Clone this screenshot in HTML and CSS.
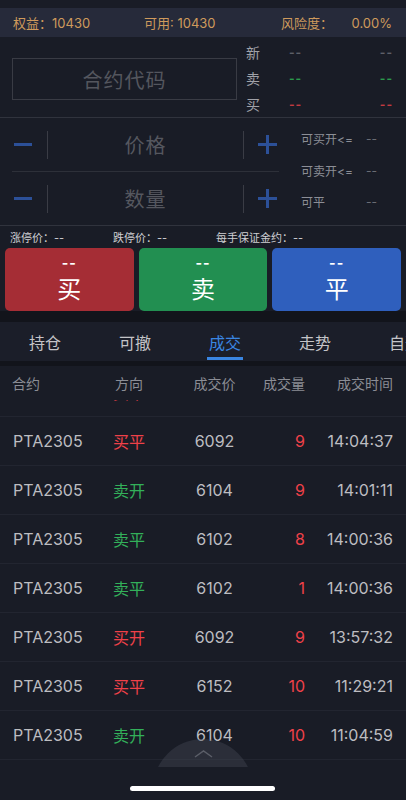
FILE: index.html
```html
<!DOCTYPE html>
<html lang="zh">
<head>
  <meta charset="UTF-8">
  <meta name="viewport" content="width=device-width, initial-scale=1.0">
  <title>交易</title>
  <link rel="stylesheet" href="styles.css">
</head>
<body>
<div class="screen">
  <div class="status"></div>

  <!-- account summary -->
  <div class="account">
    <span class="acc-a">权益：10430</span>
    <span class="acc-b">可用: 10430</span>
    <span>风险度：</span>
    <span class="acc-r">0.00%</span>
  </div>

  <!-- contract + quote -->
  <div class="quote">
    <div class="code-box">合约代码</div>
    <div class="quote-list">
      <div class="q-row"><span class="q-label">新</span><span class="q-val gray">--</span><span class="q-val2 gray">--</span></div>
      <div class="q-row"><span class="q-label">卖</span><span class="q-val green">--</span><span class="q-val2 green">--</span></div>
      <div class="q-row"><span class="q-label">买</span><span class="q-val red">--</span><span class="q-val2 red">--</span></div>
    </div>
  </div>

  <!-- price / qty -->
  <div class="order">
    <div class="steppers">
      <div class="step">
        <div class="step-btn minus"><svg width="18" height="3"><rect width="18" height="3" fill="#2c5098"/></svg></div>
        <div class="step-field">价格</div>
        <div class="step-btn plus"><svg width="19" height="19"><rect x="8" y="0" width="3" height="19" fill="#2c5098"/><rect x="0" y="8" width="19" height="3" fill="#2c5098"/></svg></div>
      </div>
      <div class="step">
        <div class="step-btn minus"><svg width="18" height="3"><rect width="18" height="3" fill="#2c5098"/></svg></div>
        <div class="step-field">数量</div>
        <div class="step-btn plus"><svg width="19" height="19"><rect x="8" y="0" width="3" height="19" fill="#2c5098"/><rect x="0" y="8" width="19" height="3" fill="#2c5098"/></svg></div>
      </div>
    </div>
    <div class="avail">
      <div class="av-row"><span class="av-label">可买开&lt;=</span><span>--</span></div>
      <div class="av-row"><span class="av-label">可卖开&lt;=</span><span>--</span></div>
      <div class="av-row"><span class="av-label">可平</span><span>--</span></div>
    </div>
  </div>

  <div class="limits">
    <span class="lim">涨停价：--</span>
    <span class="lim">跌停价：--</span>
    <span>每手保证金约：--</span>
  </div>

  <div class="actions">
    <div class="act buy"><span class="act-price">--</span><span class="act-name">买</span></div>
    <div class="act sell"><span class="act-price">--</span><span class="act-name">卖</span></div>
    <div class="act close"><span class="act-price">--</span><span class="act-name">平</span></div>
  </div>

  <div class="tabs">
    <div class="tab">持仓</div>
    <div class="tab">可撤</div>
    <div class="tab active">成交</div>
    <div class="tab">走势</div>
    <div class="tab">自选</div>
  </div>

  <div class="thead">
    <span>合约</span>
    <span>方向</span>
    <span class="c">成交价</span>
    <span class="r">成交量</span>
    <span class="r">成交时间</span>
  </div>

  <div class="list">
    <div class="rows">
      <div class="row"><span>PTA2305</span><span class="red">买平</span><span class="c">6092</span><span class="r red">9</span><span class="r">14:10:02</span></div>
      <div class="row"><span>PTA2305</span><span class="red">买平</span><span class="c">6092</span><span class="r red">9</span><span class="r">14:04:37</span></div>
      <div class="row"><span>PTA2305</span><span class="green">卖开</span><span class="c">6104</span><span class="r red">9</span><span class="r">14:01:11</span></div>
      <div class="row"><span>PTA2305</span><span class="green">卖平</span><span class="c">6102</span><span class="r red">8</span><span class="r">14:00:36</span></div>
      <div class="row"><span>PTA2305</span><span class="green">卖平</span><span class="c">6102</span><span class="r red">1</span><span class="r">14:00:36</span></div>
      <div class="row"><span>PTA2305</span><span class="red">买开</span><span class="c">6092</span><span class="r red">9</span><span class="r">13:57:32</span></div>
      <div class="row"><span>PTA2305</span><span class="red">买平</span><span class="c">6152</span><span class="r red">10</span><span class="r">11:29:21</span></div>
      <div class="row"><span>PTA2305</span><span class="green">卖开</span><span class="c">6104</span><span class="r red">10</span><span class="r">11:04:59</span></div>
    </div>

    <div class="pull">
      <div class="pull-disc"></div>
      <svg class="chev" width="20" height="10"><polyline points="1,8 9.5,2 18,8" fill="none" stroke="#5b5e68" stroke-width="1.5"/></svg>
    </div>
    <div class="home-bar"></div>
  </div>
</div>
</body>
</html>
```

FILE: styles.css
```css
body {
    margin: 0;
    background: #191c26;
    font-family: Inter, "Noto Sans CJK SC", sans-serif;
    color: #c8c8cc;
}

.screen {
    width: 406px;
    height: 800px;
    overflow: hidden;
    display: flex;
    flex-direction: column;
}

.status {
    height: 8px;
    background: #191c26;
}

/* account */
.account {
    height: 29px;
    background: #262a3a;
    display: flex;
    align-items: center;
    padding: 0 14px 0 13px;
    font-size: 13px;
    color: #cf9a5c;
}
.acc-a { width: 131px; }
.acc-b { width: 137px; }
.acc-r { margin-left: auto; }

/* quote */
.quote {
    height: 80px;
    display: flex;
    border-bottom: 1px solid #30333d;
}
.code-box {
    margin: 21px 0 0 12px;
    width: 223px;
    height: 40px;
    border: 1px solid #393b44;
    display: flex;
    align-items: center;
    justify-content: center;
    font-size: 20px;
    letter-spacing: 1px;
    color: #54565e;
}
.quote-list {
    margin: 2px 0 0 9px;
    width: 147px;
}
.q-row {
    height: 26px;
    display: flex;
    align-items: center;
    font-size: 14px;
}
.q-label {
    width: 43px;
    color: #a0a1a8;
}
.q-val, .q-val2 {
    font-size: 12px;
    font-weight: bold;
    letter-spacing: 1px;
}
.q-val2 { margin-left: auto; }
.gray { color: #5d5f68; }
.green { color: #33b05a; }
.red { color: #ef4149; }
.q-row .green { color: #2b9a4c; }
.q-row .red { color: #c23a41; }

/* order */
.order {
    height: 107px;
    display: flex;
    border-bottom: 1px solid #30333d;
}
.steppers {
    margin-left: 12px;
    width: 267px;
}
.step {
    height: 53px;
    display: flex;
    align-items: center;
}
.step + .step {
    border-top: 1px solid #2d3039;
    height: 53px;
}
.step-btn {
    width: 35px;
    height: 28px;
    display: flex;
    align-items: center;
}
.minus {
    border-right: 1px solid #3a3c45;
    padding-left: 2px;
    width: 33px;
}
.plus {
    border-left: 1px solid #3a3c45;
    justify-content: flex-end;
    padding-right: 2px;
    width: 33px;
}
.step-field {
    flex: 1;
    text-align: center;
    font-size: 20px;
    letter-spacing: 1px;
    color: #55575f;
}
.avail {
    margin: 5px 0 0 22px;
}
.av-row {
    height: 31.5px;
    display: flex;
    align-items: center;
    font-size: 12px;
    color: #6a6c74;
}
.av-label {
    width: 65px;
    color: #8c8e96;
}

.limits {
    height: 22px;
    display: flex;
    align-items: center;
    padding-left: 10px;
    font-size: 11px;
    color: #cfcfd3;
}
.lim { width: 103px; }

/* buttons */
.actions {
    display: grid;
    grid-template-columns: 1fr 1fr 1fr;
    gap: 5px;
    padding: 0 5px;
    height: 63px;
}
.act {
    border-radius: 5px;
    color: #fff;
    display: flex;
    flex-direction: column;
    align-items: center;
}
.act-price {
    font-size: 14px;
    font-weight: bold;
    margin-top: 6px;
    letter-spacing: 1px;
}
.act-name {
    font-size: 24px;
    line-height: 30px;
    margin-top: 4px;
}
.buy { background: #a52d35; }
.sell { background: #228f51; }
.close { background: #2f5fbd; }

/* tabs */
.tabs {
    margin-top: 11px;
    height: 39px;
    background: #1b1e29;
    display: flex;
    border-bottom: 5px solid #12141b;
    box-shadow: 0 -11px 0 #12141b;
}
.tab {
    flex: 0 0 90px;
    display: flex;
    align-items: center;
    justify-content: center;
    font-size: 16px;
    color: #c4c4c8;
    position: relative;
}
.tab.active { color: #3a86e2; }
.tab.active::after {
    content: "";
    position: absolute;
    left: 27px;
    width: 36px;
    bottom: 1px;
    height: 3px;
    background: #3a86e2;
}

/* table */
.thead, .row {
    display: grid;
    grid-template-columns: 101px 70px 63px 59px 1fr;
    align-items: center;
    padding: 0 13px 0 12px;
}
.thead {
    height: 34px;
    font-size: 14px;
    color: #8b8d95;
    background: #191c26;
    position: relative;
    z-index: 1;
}
.thead span:nth-child(2) { padding-left: 2px; }
.c { text-align: center; }
.r { text-align: right; }

.list {
    flex: 1;
    position: relative;
    overflow: hidden;
}
.rows { margin-top: -32px; }
.row {
    height: 48px;
    border-bottom: 1px solid #222530;
    font-size: 16px;
    color: #bdbdc1;
}
.row span:first-child { padding-left: 1px; }

.pull {
    position: absolute;
    left: 153px;
    top: 339px;
    width: 100px;
    height: 28px;
    overflow: hidden;
}
.pull-disc {
    width: 100px;
    height: 100px;
    border-radius: 50%;
    background: rgba(70, 74, 88, 0.4);
}
.chev {
    position: absolute;
    left: 41px;
    top: 10px;
}
.home-bar {
    position: absolute;
    left: 130px;
    top: 386px;
    width: 145px;
    height: 5px;
    border-radius: 3px;
    background: #fff;
}
```
